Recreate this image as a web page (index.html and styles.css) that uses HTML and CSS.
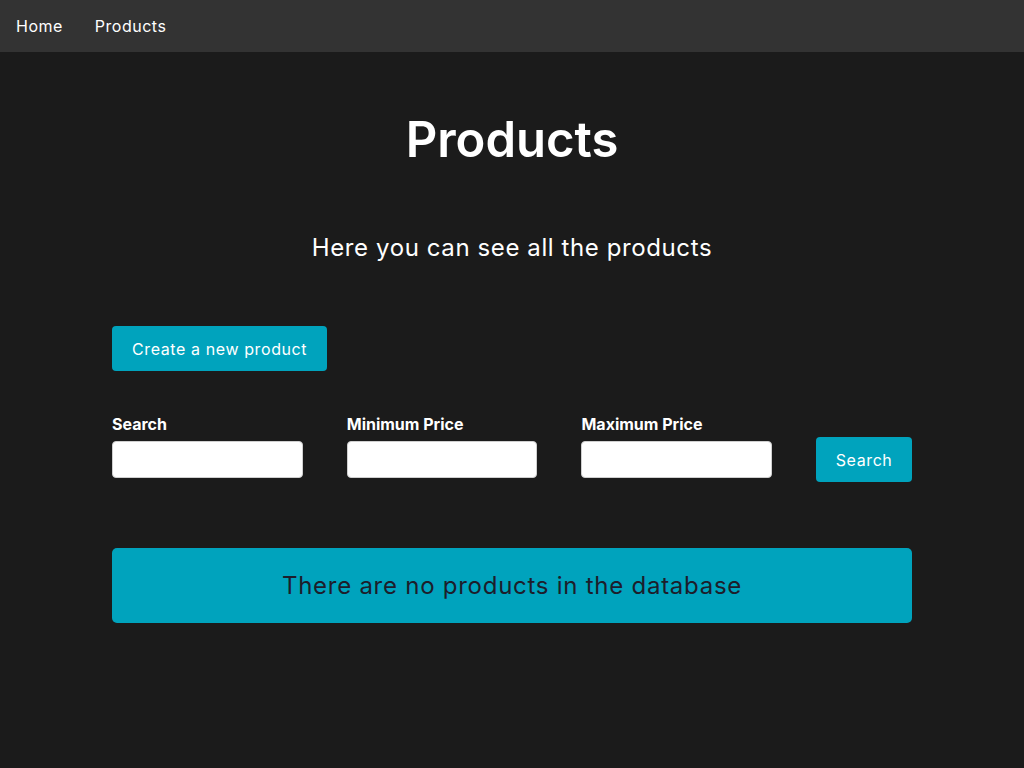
FILE: index.html
```html
<!DOCTYPE html>
<html lang="en">
<head>
<meta charset="utf-8">
<title>Products</title>
<link rel="stylesheet" href="styles.css">
</head>
<body>
<nav class="navbar">
  <a class="nav-link" href="#">Home</a>
  <a class="nav-link" href="#">Products</a>
</nav>
<main class="container">
  <h1 class="title">Products</h1>
  <p class="subtitle">Here you can see all the products</p>
  <div class="actions">
    <button class="btn" type="button">Create a new product</button>
  </div>
  <form class="filters">
    <div class="field">
      <label class="label">Search</label>
      <input class="input" type="text">
    </div>
    <div class="field">
      <label class="label">Minimum Price</label>
      <input class="input" type="text">
    </div>
    <div class="field">
      <label class="label">Maximum Price</label>
      <input class="input" type="text">
    </div>
    <button class="btn btn-search" type="button">Search</button>
  </form>
  <div class="alert">There are no products in the database</div>
</main>
</body>
</html>
```
FILE: styles.css
```css
* { box-sizing: border-box; }
html, body {
  margin: 0;
  background: #1b1b1b;
  color: #ffffff;
  font-family: Inter, "Noto Sans", sans-serif;
}
.navbar {
  height: 52px;
  background: #333333;
  display: flex;
  align-items: center;
}
.nav-link {
  color: #ffffff;
  text-decoration: none;
  font-size: 16px;
  letter-spacing: 0.5px;
  padding: 0 16px;
}
.container {
  width: 800px;
  margin: 0 auto;
  display: flex;
  flex-direction: column;
}
.title {
  margin: 58px 0 0;
  font-size: 49px;
  font-weight: 600;
  line-height: 60px;
  text-align: center;
}
.subtitle {
  margin: 61px 0 0;
  font-size: 24px;
  letter-spacing: 0.6px;
  line-height: 34px;
  text-align: center;
}
.actions {
  margin-top: 61px;
  display: flex;
}
.btn {
  background: #00a3bd;
  color: #ffffff;
  border: none;
  border-radius: 4px;
  font-family: inherit;
  font-size: 16px;
  letter-spacing: 0.6px;
  height: 45px;
  padding: 0 20px;
}
.filters {
  margin-top: 41px;
  display: flex;
  align-items: flex-end;
  gap: 44px;
}
.field {
  display: flex;
  flex-direction: column;
  width: 191px;
}
.label {
  font-size: 16px;
  font-weight: 700;
  line-height: 24px;
  margin-bottom: 5px;
}
.input {
  height: 37px;
  border: 1px solid #cfcfcf;
  border-radius: 4px;
  background: #ffffff;
}
.btn-search {
  width: 96px;
  padding: 0;
  margin-bottom: -4px;
}
.alert {
  margin-top: 70px;
  height: 75px;
  background: #00a3bd;
  border-radius: 5px;
  color: #1d1d2b;
  font-size: 24px;
  letter-spacing: 0.74px;
  display: flex;
  align-items: center;
  justify-content: center;
}
```
